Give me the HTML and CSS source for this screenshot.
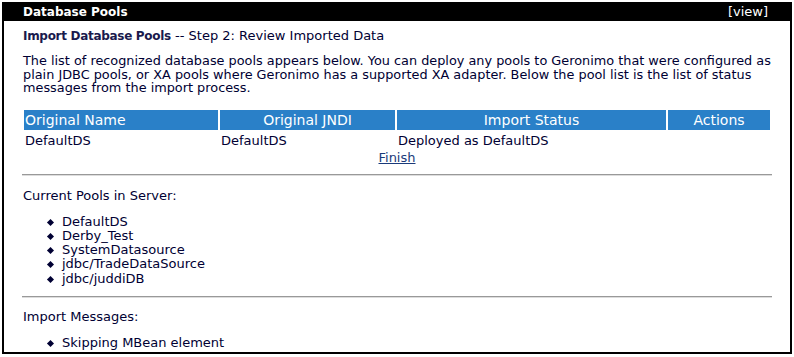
FILE: index.html
```html
<!DOCTYPE html>
<html lang="en">
<head>
  <meta charset="UTF-8">
  <title>Database Pools</title>
  <link rel="stylesheet" href="styles.css">
</head>
<body>
  <div class="portlet">
    <div class="portlet-title">
      <span>Database Pools</span>
      <span class="portlet-mode">[view]</span>
    </div>
    <div class="portlet-body">
      <p class="step"><b>Import Database Pools</b> -- Step 2: Review Imported Data</p>

      <p class="intro">The list of recognized database pools appears below. You can deploy any pools to Geronimo that were configured as<br>
        plain JDBC pools, or XA pools where Geronimo has a supported XA adapter. Below the pool list is the list of status<br>
        messages from the import process.</p>

      <table class="pools">
        <colgroup>
          <col class="c-name">
          <col class="c-jndi">
          <col class="c-status">
          <col>
        </colgroup>
        <tr>
          <th class="left">Original Name</th>
          <th>Original JNDI</th>
          <th>Import Status</th>
          <th>Actions</th>
        </tr>
        <tr>
          <td>DefaultDS</td>
          <td>DefaultDS</td>
          <td>Deployed as DefaultDS</td>
          <td></td>
        </tr>
      </table>
      <div class="finish"><a href="#">Finish</a></div>

      <hr>

      <p class="label">Current Pools in Server:</p>
      <ul>
        <li>DefaultDS</li>
        <li>Derby_Test</li>
        <li>SystemDatasource</li>
        <li>jdbc/TradeDataSource</li>
        <li>jdbc/juddiDB</li>
      </ul>

      <hr class="after-list">

      <p class="label messages">Import Messages:</p>
      <ul>
        <li>Skipping MBean element</li>
      </ul>
    </div>
  </div>
</body>
</html>
```

FILE: styles.css
```css
body {
  margin: 2px;
  font-family: "DejaVu Sans", Verdana, sans-serif;
  font-size: 13px;
  color: #000033;
  background-color: white;
}
.portlet {
  border: 2px solid black;
  border-top: 1px solid black;
  height: 352px;
  box-sizing: border-box;
  overflow: hidden;
}
.portlet-title {
  background-color: black;
  color: white;
  font-weight: bold;
  font-size: 12px;
  height: 18px;
  line-height: 18px;
  padding: 0 22px 0 19px;
  display: flex;
  justify-content: space-between;
}
.portlet-mode {
  font-weight: normal;
  font-size: 13px;
}
.portlet-body {
  padding: 0 18px 0 18px;
}
.step {
  margin: 7px 0 0 1px;
  line-height: 16px;
}
.step b {
  color: #1a1a4d;
  font-size: 12px;
  letter-spacing: -0.3px;
}
.intro {
  margin: 10px 0 0 1px;
  line-height: 13.5px;
  font-size: 12.85px;
  white-space: nowrap;
}
.pools {
  width: 100%;
  table-layout: fixed;
  margin: 15px 0 0;
  border-spacing: 2px 0;
  border-collapse: separate;
}
.c-name { width: 194px; }
.c-jndi { width: 175px; }
.c-status { width: 269px; }
.pools th {
  background-color: #2a80c8;
  color: white;
  font-weight: normal;
  font-size: 14px;
  height: 20px;
  padding: 0;
  text-align: center;
}
.pools th.left {
  text-align: left;
  padding-left: 1px;
}
.pools td {
  padding: 3px 0 0 1px;
  line-height: 16px;
}
.finish {
  text-align: center;
  line-height: 18px;
}
.finish a {
  color: #1a3a7a;
}
hr {
  margin: 7px 0 0;
  border: none;
  border-top: 1px solid #999;
  border-bottom: 1px solid #ddd;
  height: 0;
}
hr.after-list {
  margin-top: 10px;
}
.label {
  margin: 12px 0 0 1px;
  line-height: 15px;
}
.label.messages {
  margin-top: 11px;
}
ul {
  margin: 12px 0 0;
  padding-left: 40px;
  list-style: none;
}
ul li {
  line-height: 14.3px;
  position: relative;
}
ul li::before {
  content: "";
  position: absolute;
  left: -14px;
  top: 5px;
  width: 5px;
  height: 5px;
  background: #000033;
  transform: rotate(45deg);
}
```
